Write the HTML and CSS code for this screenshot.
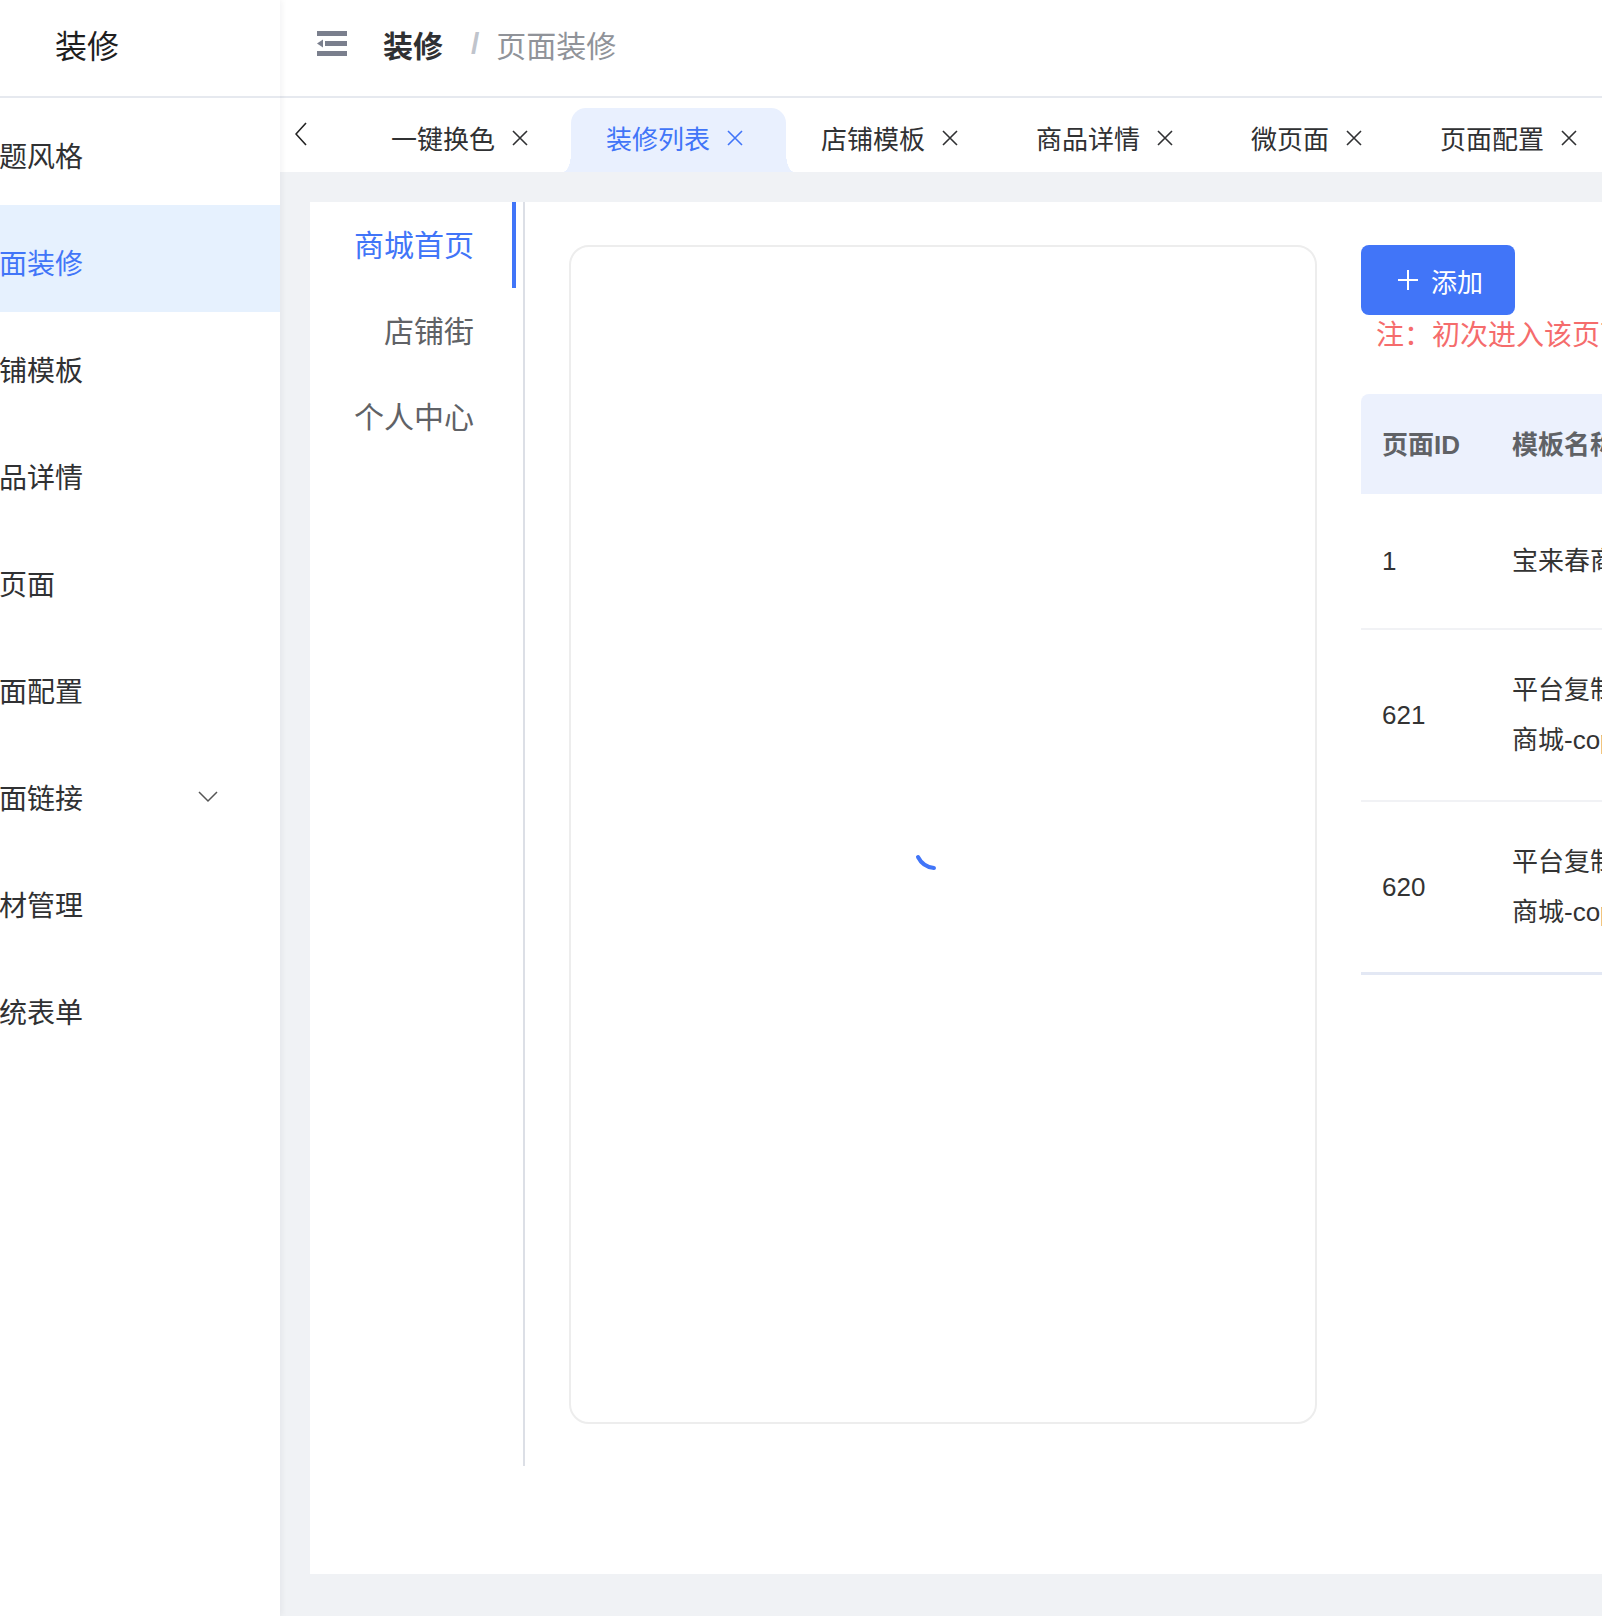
FILE: index.html
```html
<!DOCTYPE html>
<html lang="zh-CN">
<head>
    <meta charset="UTF-8">
    <meta name="viewport" content="width=device-width, initial-scale=1.0">
    <title>页面装修</title>
    <link rel="stylesheet" href="styles.css">
</head>
<body>
    <div class="layout">
        <aside class="sidebar">
            <div class="logo">装修</div>
            <ul class="menu">
                <li class="menu-item"><span>主题风格</span></li>
                <li class="menu-item active"><span>页面装修</span></li>
                <li class="menu-item"><span>店铺模板</span></li>
                <li class="menu-item"><span>商品详情</span></li>
                <li class="menu-item"><span>微页面</span></li>
                <li class="menu-item"><span>页面配置</span></li>
                <li class="menu-item">
                    <span>页面链接</span>
                    <svg class="menu-arrow" viewBox="0 0 20 12"><polyline points="1,1 10,10 19,1"/></svg>
                </li>
                <li class="menu-item"><span>素材管理</span></li>
                <li class="menu-item"><span>系统表单</span></li>
            </ul>
        </aside>

        <div class="main">
            <header class="navbar">
                <svg class="hamburger" viewBox="0 0 30 25">
                    <rect x="0" y="0" width="30" height="5"/>
                    <polygon points="0,12.5 6,8.5 6,16.5"/>
                    <rect x="8" y="10" width="22" height="5"/>
                    <rect x="0" y="20" width="30" height="5"/>
                </svg>
                <div class="breadcrumb">
                    <span class="crumb-root">装修</span>
                    <span class="crumb-sep">/</span>
                    <span class="crumb-current">页面装修</span>
                </div>
            </header>

            <div class="tags-bar">
                <svg class="tags-prev" viewBox="0 0 12 24"><polyline points="11,1 1,12 11,23"/></svg>
                <ul class="tags">
                    <li class="tag">一键换色<svg class="close" viewBox="0 0 16 16"><path d="M1 1L15 15M15 1L1 15"/></svg></li>
                    <li class="tag active">装修列表<svg class="close" viewBox="0 0 16 16"><path d="M1 1L15 15M15 1L1 15"/></svg></li>
                    <li class="tag">店铺模板<svg class="close" viewBox="0 0 16 16"><path d="M1 1L15 15M15 1L1 15"/></svg></li>
                    <li class="tag">商品详情<svg class="close" viewBox="0 0 16 16"><path d="M1 1L15 15M15 1L1 15"/></svg></li>
                    <li class="tag">微页面<svg class="close" viewBox="0 0 16 16"><path d="M1 1L15 15M15 1L1 15"/></svg></li>
                    <li class="tag">页面配置<svg class="close" viewBox="0 0 16 16"><path d="M1 1L15 15M15 1L1 15"/></svg></li>
                </ul>
            </div>

            <div class="app-main">
                <div class="panel">
                    <ul class="sub-nav">
                        <li class="sub-item active">商城首页</li>
                        <li class="sub-item">店铺街</li>
                        <li class="sub-item">个人中心</li>
                    </ul>

                    <div class="sub-body">
                        <div class="preview">
                            <!-- loading spinner while the preview frame loads -->
                            <svg class="spinner" viewBox="0 0 100 100"><path d="M25 72 A20 20 0 0 0 41 83"/></svg>
                        </div>

                        <div class="side">
                            <button class="btn-add">
                                <svg viewBox="0 0 20 20"><path d="M10 0V20M0 10H20"/></svg>
                                添加
                            </button>
                            <p class="note">注：初次进入该页面，请先添加并设置首页模板</p>

                            <table class="tpl-table">
                                <colgroup>
                                    <col class="col-id">
                                    <col class="col-name">
                                    <col>
                                </colgroup>
                                <thead>
                                    <tr>
                                        <th>页面ID</th>
                                        <th>模板名称</th>
                                        <th>添加时间</th>
                                    </tr>
                                </thead>
                                <tbody>
                                    <tr class="single">
                                        <td>1</td>
                                        <td>宝来春商城首页</td>
                                        <td>2023-05-12 10:21:36</td>
                                    </tr>
                                    <tr>
                                        <td>621</td>
                                        <td>平台复制模板<br>商城-copy</td>
                                        <td>2024-03-08 16:42:10</td>
                                    </tr>
                                    <tr>
                                        <td>620</td>
                                        <td>平台复制模板<br>商城-copy</td>
                                        <td>2024-03-08 16:40:55</td>
                                    </tr>
                                </tbody>
                            </table>
                        </div>
                    </div>
                </div>
            </div>
        </div>
    </div>
</body>
</html>
```

FILE: styles.css
```css
* {
    box-sizing: border-box;
}
body {
    margin: 0;
    font-family: "Noto Sans CJK SC", sans-serif;
    color: #303133;
    overflow: hidden;
}
ul {
    list-style: none;
    margin: 0;
    padding: 0;
}
.layout {
    display: flex;
    height: 100vh;
}

/* sidebar */
.sidebar {
    width: 280px;
    flex: none;
    background-color: #fff;
    overflow: hidden;
    box-shadow: 2px 0 6px rgba(0, 21, 41, 0.05);
    position: relative;
    z-index: 2;
}
.logo {
    height: 98px;
    border-bottom: 2px solid #e6e9ef;
    display: flex;
    align-items: center;
    padding: 0 0 8px 55px;
    font-size: 32px;
    color: #1f1f1f;
}
.menu-item {
    height: 107px;
    display: flex;
    align-items: center;
    padding-top: 6px;
    font-size: 28px;
    color: #303133;
    white-space: nowrap;
}
.menu-item span {
    margin-left: -29px;
}
.menu-item.active {
    background-color: #e6f1fe;
    color: #4175f8;
}
.menu-arrow {
    width: 20px;
    height: 12px;
    margin-left: auto;
    margin-right: 62px;
    fill: none;
    stroke: #555;
    stroke-width: 1.5;
}

/* main column */
.main {
    flex: 1;
    min-width: 0;
    display: flex;
    flex-direction: column;
    background-color: #f0f2f5;
}
.navbar {
    height: 98px;
    flex: none;
    background-color: #fff;
    border-bottom: 2px solid #e6e9ef;
    display: flex;
    align-items: center;
    padding: 0 0 9px 37px;
}
.hamburger {
    width: 30px;
    height: 25px;
    margin-right: 36px;
    fill: #7a7f8d;
}
.breadcrumb {
    display: flex;
    align-items: center;
    font-size: 30px;
}
.crumb-root {
    font-weight: 700;
    color: #303133;
}
.crumb-sep {
    margin: 0 17px 0 28px;
    color: #c0c4cc;
    font-weight: 700;
    font-family: "Liberation Sans", sans-serif;
}
.crumb-current {
    color: #909399;
}

/* visited tabs */
.tags-bar {
    height: 74px;
    flex: none;
    background-color: #fff;
    display: flex;
    align-items: flex-end;
    padding-left: 15px;
}
.tags-prev {
    flex: none;
    align-self: center;
    width: 12px;
    height: 24px;
    margin: 0 49px 2px 0;
    fill: none;
    stroke: #222;
    stroke-width: 1.6;
}
.tags {
    flex: none;
    display: flex;
}
.tag {
    position: relative;
    height: 64px;
    display: flex;
    align-items: center;
    padding: 0 43px 5px 35px;
    font-size: 26px;
    color: #303133;
    white-space: nowrap;
}
.tag .close {
    width: 16px;
    height: 16px;
    margin-left: 17px;
    stroke: currentColor;
    stroke-width: 1.6;
}
.tag.active {
    background-color: #e9f0fe;
    color: #4175f8;
    border-radius: 15px 15px 0 0;
}
.tag.active::before,
.tag.active::after {
    content: "";
    position: absolute;
    bottom: 0;
    width: 8px;
    height: 19px;
}
.tag.active::before {
    left: -8px;
    background: radial-gradient(ellipse 8px 19px at 0 0, transparent 98%, #e9f0fe 100%);
}
.tag.active::after {
    right: -8px;
    background: radial-gradient(ellipse 8px 19px at 100% 0, transparent 98%, #e9f0fe 100%);
}

/* page body */
.app-main {
    flex: 1;
    display: flex;
    padding: 30px 0 42px 30px;
    overflow: hidden;
}
.panel {
    flex: 1;
    display: flex;
    align-items: flex-start;
    background-color: #fff;
    overflow: hidden;
}
.sub-nav {
    flex: none;
    width: 215px;
    height: 1264px;
    padding-right: 7px;
    border-right: 2px solid #dcdfe6;
}
.sub-item {
    height: 86px;
    display: flex;
    align-items: center;
    justify-content: flex-end;
    padding: 0 38px 5px 0;
    border-right: 4px solid transparent;
    font-size: 30px;
    color: #606266;
}
.sub-item.active {
    color: #4175f8;
    border-right-color: #4175f8;
}
.sub-body {
    flex: none;
    display: flex;
    align-items: flex-start;
    padding: 43px 0 0 44px;
}
.preview {
    flex: none;
    width: 748px;
    height: 1179px;
    border: 2px solid #ededed;
    border-radius: 20px;
    display: flex;
    align-items: center;
    justify-content: center;
}
.spinner {
    width: 100px;
    height: 100px;
    fill: none;
    stroke: #4175f8;
    stroke-width: 4;
    stroke-linecap: round;
}
.side {
    flex: none;
    width: 900px;
    margin-left: 44px;
}
.btn-add {
    display: flex;
    align-items: center;
    width: 154px;
    height: 70px;
    padding: 0 0 0 37px;
    border: none;
    border-radius: 8px;
    background-color: #4175f8;
    color: #fff;
    font-family: inherit;
    font-size: 26px;
}
.btn-add svg {
    width: 20px;
    height: 20px;
    margin-right: 13px;
    stroke: #fff;
    stroke-width: 2;
}
.note {
    margin: 0;
    padding-left: 15px;
    font-size: 28px;
    line-height: 36px;
    color: #f56c6c;
    white-space: nowrap;
}
.tpl-table {
    margin-top: 43px;
    width: 1100px;
    table-layout: fixed;
    border-collapse: separate;
    border-spacing: 0;
    font-family: "Liberation Sans", "Noto Sans CJK SC", sans-serif;
    font-size: 26px;
}
.col-id {
    width: 130px;
}
.col-name {
    width: 360px;
}
.tpl-table th {
    height: 100px;
    padding: 0 21px 4px;
    background-color: #ecf1fd;
    text-align: left;
    color: #606266;
    font-weight: 700;
}
.tpl-table th:first-child {
    border-top-left-radius: 8px;
}
.tpl-table td {
    padding: 35px 21px;
    line-height: 50px;
    color: #333;
    border-bottom: 2px solid #f1f2f5;
    white-space: nowrap;
}
.tpl-table tr.single td {
    padding: 42px 21px;
}
.tpl-table tr:last-child td {
    border-bottom: 3px solid #e3e8f4;
}
```
